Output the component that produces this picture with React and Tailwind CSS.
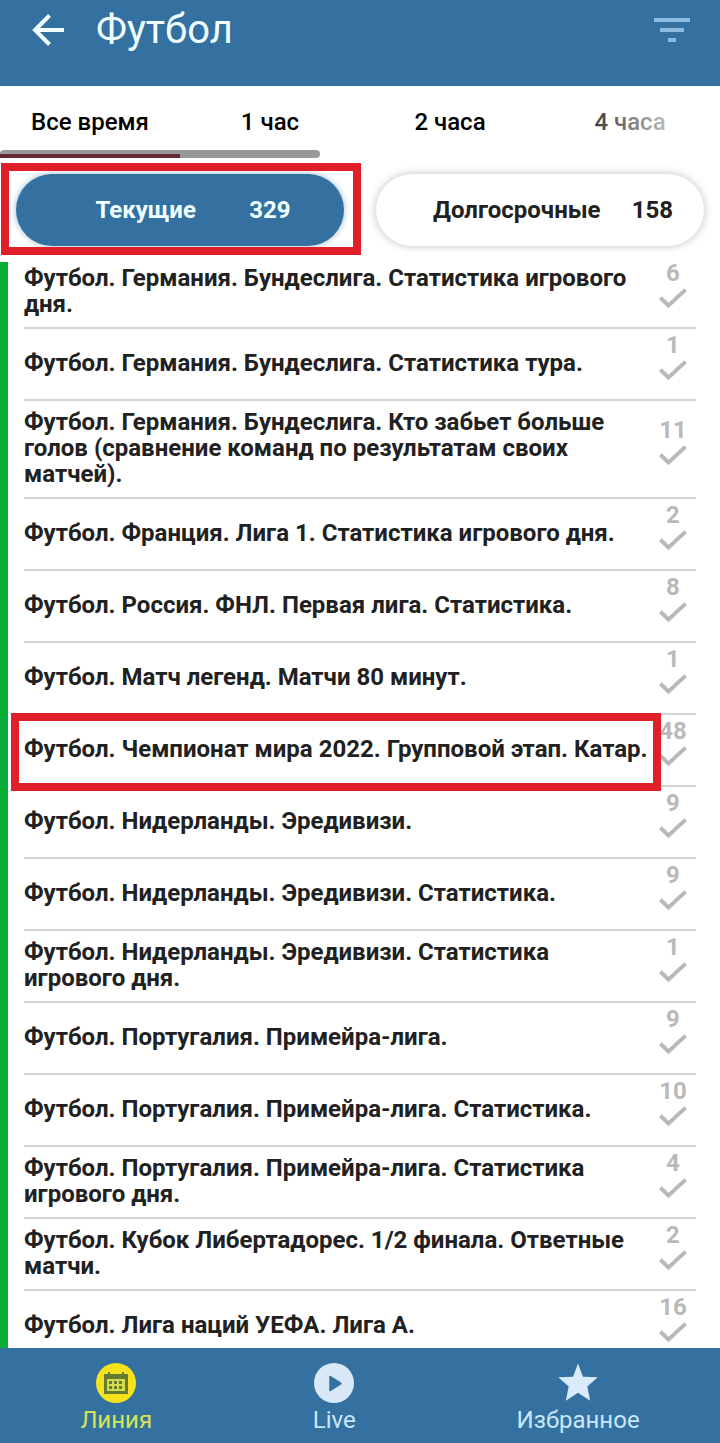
import { useState } from 'react';
import clsx from 'clsx';

const times = ['Все время', '1 час', '2 часа', '4 часа'];

const filters = [
  { id: 'current', label: 'Текущие', count: 329, framed: true },
  { id: 'long', label: 'Долгосрочные', count: 158 },
];

const leagues = [
  { name: 'Футбол. Германия. Бундеслига. Статистика игрового дня.', count: 6 },
  { name: 'Футбол. Германия. Бундеслига. Статистика тура.', count: 1 },
  { name: 'Футбол. Германия. Бундеслига. Кто забьет больше голов (сравнение команд по результатам своих матчей).', count: 11 },
  { name: 'Футбол. Франция. Лига 1. Статистика игрового дня.', count: 2 },
  { name: 'Футбол. Россия. ФНЛ. Первая лига. Статистика.', count: 8 },
  { name: 'Футбол. Матч легенд. Матчи 80 минут.', count: 1 },
  { name: 'Футбол. Чемпионат мира 2022. Групповой этап. Катар.', count: 48, framed: true },
  { name: 'Футбол. Нидерланды. Эредивизи.', count: 9 },
  { name: 'Футбол. Нидерланды. Эредивизи. Статистика.', count: 9 },
  { name: 'Футбол. Нидерланды. Эредивизи. Статистика игрового дня.', count: 1 },
  { name: 'Футбол. Португалия. Примейра-лига.', count: 9 },
  { name: 'Футбол. Португалия. Примейра-лига. Статистика.', count: 10 },
  { name: 'Футбол. Португалия. Примейра-лига. Статистика игрового дня.', count: 4 },
  { name: 'Футбол. Кубок Либертадорес. 1/2 финала. Ответные матчи.', count: 2 },
  { name: 'Футбол. Лига наций УЕФА. Лига А.', count: 16 },
];

function BackIcon() {
  return (
    <svg width="32" height="32" viewBox="0 0 32 32" fill="none" stroke="currentColor" strokeWidth="4">
      <path d="M32 16H3M17.500 1.500L3 16l14.500 14.500" />
    </svg>
  );
}

function FilterIcon() {
  return (
    <svg width="36" height="24" viewBox="0 0 36 24" fill="currentColor">
      <path d="M0 0h36v4H0zM6 10h24v4H6zM14 20h8v4h-8z" />
    </svg>
  );
}

function CheckIcon() {
  return (
    <svg width="28" height="21" viewBox="0 0 28 21" fill="none" stroke="currentColor" strokeWidth="4">
      <path d="M1.400 9.700L9.500 17.500L26.600 1.600" />
    </svg>
  );
}

function CalendarIcon() {
  return (
    <svg width="40" height="40" viewBox="0 0 40 40">
      <circle cx="20" cy="20" r="20" fill="#f5e11c" />
      <path fill="#667a34" d="M12 9h2v2h12V9h2v2h4v20H8V11h4z" />
      <path fill="#d3dc4a" d="M11 16h18v12H11z" />
      <path fill="#667a34" d="M13 18h3v3h-3zM18 18h3v3h-3zM23 18h3v3h-3zM13 23h3v3h-3zM18 23h3v3h-3zM23 23h3v3h-3z" />
    </svg>
  );
}

function PlayIcon() {
  return (
    <svg width="40" height="40" viewBox="0 0 40 40">
      <circle cx="20" cy="20" r="20" fill="#d9e8f6" />
      <path d="M16 13.500L27 20.500L16 27.500z" fill="#3471a1" stroke="#3471a1" strokeWidth="1.500" strokeLinejoin="round" />
    </svg>
  );
}

function StarIcon() {
  return (
    <svg width="40" height="40" viewBox="0 0 40 40" fill="#d9eafa">
      <path d="M20 0.500L25 13.800L39.700 14.300L29.300 23.600L32.200 37.800L20 29.800L7.800 37.800L10.700 23.600L0.300 14.300L15 13.800z" />
    </svg>
  );
}

const navItems = [
  { label: 'Линия', icon: CalendarIcon, active: true },
  { label: 'Live', icon: PlayIcon },
  { label: 'Избранное', icon: StarIcon },
];

function Frame({ className }) {
  return <span className={clsx('pointer-events-none absolute z-10 border-8 border-[#df202a]', className)} />;
}

function App() {
  const [time, setTime] = useState(0);
  const [filter, setFilter] = useState('current');

  return (
    <div className="flex h-screen flex-col overflow-hidden bg-white font-['Roboto',sans-serif] text-[#212121]">
      {/* Header */}
      <header className="flex items-start justify-between bg-[#3471a1] px-8 pt-1 pb-[30px] text-[#f0ffff]">
        <div className="flex items-center gap-8">
          <button aria-label="Назад">
            <BackIcon />
          </button>
          <h1 className="text-[40px] leading-[52px]">Футбол</h1>
        </div>
        <button aria-label="Фильтр" className="-mr-4 p-3.5 text-[#8dbce0]">
          <FilterIcon />
        </button>
      </header>

      {/* Time range */}
      <nav className="relative">
        <div className="grid grid-cols-4">
          {times.map((label, i) => (
            <button
              key={label}
              onClick={() => setTime(i)}
              className={clsx('h-[72px] text-2xl font-medium text-black', time === i && 'cursor-default')}
            >
              {label}
            </button>
          ))}
        </div>
        <div className="pointer-events-none absolute top-0 right-0 h-full w-40 bg-linear-to-r from-white/0 to-white to-90%" />
        <div className="absolute bottom-0 left-0 flex h-2 w-4/9 items-end rounded-full bg-[#999999]">
          <div className="h-1 w-9/16 bg-[#612b31]" />
        </div>
      </nav>

      {/* Filters */}
      <div className="grid grid-cols-2 gap-8 px-4 pt-4 pb-4">
        {filters.map((item) => (
          <div key={item.id} className="relative">
            <button
              onClick={() => setFilter(item.id)}
              className={clsx(
                'flex h-[72px] w-full items-center justify-evenly rounded-full pl-[26px] text-2xl font-bold',
                filter === item.id
                  ? 'bg-[#3471a1] text-[#f0ffff] shadow-[0_0_6px_#3471a180]'
                  : 'bg-white shadow-[0_0_8px_#00000040]'
              )}
            >
              <span>{item.label}</span>
              <span>{item.count}</span>
            </button>
            {item.framed && <Frame className="-top-[11px] -right-[17px] -bottom-[9px] -left-[15px]" />}
          </div>
        ))}
      </div>

      {/* Leagues */}
      <main className="min-h-0 flex-1 border-l-8 border-[#08ad37]">
        <ul className="-mt-[5px] pr-6 pl-4">
          {leagues.map((league) => (
            <li key={league.name} className="relative flex min-h-[72px] items-center border-b-2 border-[#cfd4d5]">
              <a href="#" className="flex-1 pt-2 pb-2.5 text-2xl leading-[26px] font-bold">
                {league.name}
              </a>
              <div className="flex w-[46px] flex-col items-center gap-px pb-[17px] text-[#b9b9b9]">
                <span className="text-2xl leading-[28px] font-bold">{league.count}</span>
                <CheckIcon />
              </div>
              {league.framed && <Frame className="-top-0.5 right-[35px] -bottom-1.5 -left-[13px]" />}
            </li>
          ))}
        </ul>
      </main>

      {/* Bottom navigation, lies over the end of the list */}
      <nav className="relative z-20 flex bg-[#3471a1]">
        {navItems.map(({ label, icon: Icon, active }) => (
          <a
            key={label}
            href="#"
            className={clsx(
              'flex flex-auto flex-col items-center pt-[15px] pb-1.5 text-2xl leading-[34px]',
              active ? 'text-[#d8e458]' : 'text-[#c9e7fb]'
            )}
          >
            <Icon />
            {label}
          </a>
        ))}
      </nav>
    </div>
  );
}

export default App;
